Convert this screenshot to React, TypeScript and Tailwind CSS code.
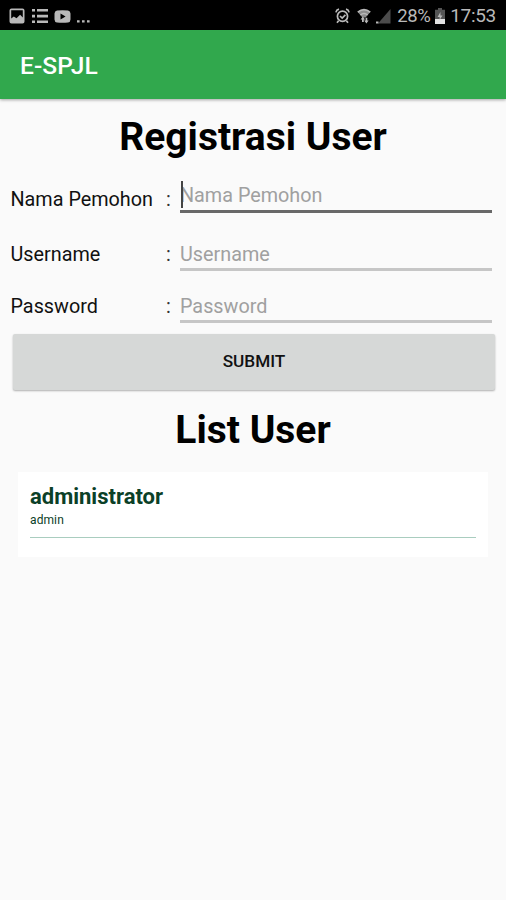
import clsx from "clsx";

function StatusBar() {
  return (
    <div className="flex h-[30px] items-center justify-between bg-black pl-[9px] pr-[10px] pt-[2px] text-[#b9b9b9]">
      <div className="flex items-center">
        <svg className="h-4 w-4" viewBox="0 0 16 16" fill="currentColor">
          <path
            fillRule="evenodd"
            d="M2.5 0.5h11a2 2 0 0 1 2 2v11a2 2 0 0 1-2 2h-11a2 2 0 0 1-2-2v-11a2 2 0 0 1 2-2zM2.2 2.2v8.2l2.6-2 2.7 1.8 3.6-3.4 2.7 2.8V2.2z"
          />
        </svg>
        <svg className="ml-[7px] h-4 w-4" viewBox="0 0 16 16" fill="currentColor">
          <path d="M0 1h3v2.6H0zM5 1h11v2.6H5zM0 6.8h3v2.6H0zM5 6.8h11v2.6H5zM0 12.4h3V15H0zM5 12.4h11V15H5z" />
        </svg>
        <svg className="ml-[6px] h-[13px] w-[17px]" viewBox="0 0 17 13" fill="currentColor">
          <path
            fillRule="evenodd"
            d="M3 0.5Q8.5 0 14 0.5Q16.4 0.8 16.5 3.5v6q-.1 2.7-2.5 3q-5.5.5-11 0Q.6 12.2.5 9.5v-6Q.6.8 3 .5zM6.5 3.6v5.8L11.6 6.5z"
          />
        </svg>
        <svg className="ml-[6px] mt-[10px] h-[3px] w-[13px]" viewBox="0 0 13 3" fill="currentColor">
          <path d="M0 .2h2.6v2.4H0zM5 .2h2.6v2.4H5zM10 .2h2.6v2.4H10z" />
        </svg>
      </div>
      <div className="flex items-center">
        <svg
          className="h-4 w-[15px]"
          viewBox="0 0 15 16"
          fill="none"
          stroke="currentColor"
          strokeWidth="1.7"
        >
          <circle cx="7.5" cy="8.2" r="5.1" />
          <path d="M.9 4.3A4 4 0 0 1 4 1.2M14.1 4.3A4 4 0 0 0 11 1.2M5 8l2.2 2.1L10.4 6.8M3.6 12.7 2 14.8M11.4 12.7l1.6 2.1" />
        </svg>
        <svg className="ml-[7px] h-4 w-[14px]" viewBox="0 0 14 16">
          <path d="M.5 3.8Q7-1.4 13.5 3.8L8.6 9.6H5.4z" fill="#8c8c8c" />
          <path
            d="M.8 4.1Q7-.8 13.2 4.1M3.4 7Q7 4 10.6 7"
            fill="none"
            stroke="currentColor"
            strokeWidth="1.6"
          />
          <path d="M5.8 8.5 3.6 11.4H5V14h1.8v-2.6H8zM9.4 15.6l2.2-3h-1.3V9.8H8.6v2.8H7.2z" fill="currentColor" />
        </svg>
        <svg className="ml-[5px] h-[15px] w-[15px]" viewBox="0 0 15 15">
          <path d="M14.5 0v14.5H2z" fill="#4c4c4c" />
          <path d="M0 12.5h2.5v2H0z" fill="currentColor" />
        </svg>
        <span className="ml-[6px] w-[34px] text-[18.5px] leading-6 tracking-[-0.3px]">28%</span>
        <svg className="ml-[4px] h-4 w-[10px]" viewBox="0 0 10 16">
          <path d="M3 0h4v1.8h3V16H0V1.8h3z" fill="#555" />
          <path d="M0 11h10v5H0z" fill="#e2e2e2" />
          <path d="M5.4 4 2.6 9H4.6v3L7.5 7.6H5.5z" fill="#b5b5b5" />
        </svg>
        <span className="ml-[5px] text-[19px] leading-6 tracking-[-0.3px]">17:53</span>
      </div>
    </div>
  );
}

export default function App() {
  const fields = [
    { name: "Nama Pemohon", focused: true, row: "h-[52px]" },
    { name: "Username", focused: false, row: "h-[58px]" },
    { name: "Password", focused: false, row: "h-[52px]" },
  ];

  const users = [{ name: "administrator", role: "admin" }];

  return (
    <div className="h-[900px] w-full overflow-hidden bg-[#fafafa] font-['Roboto',sans-serif] text-black">
      <StatusBar />
      <header className="relative flex h-[69px] items-center bg-[#31a84d] pl-5 pt-[3px] shadow-[0_1px_3px_rgba(0,0,0,0.35)]">
        <h1 className="text-[24.5px] font-medium leading-8 tracking-[0.1px] text-white">E-SPJL</h1>
      </header>
      <section className="pt-[14px]">
        <h2 className="text-center text-[39px] font-bold leading-[48px]">Registrasi User</h2>
        {fields.map((field) => (
          <div key={field.name} className={clsx("flex items-end pl-[10.5px] pr-[14px]", field.row)}>
            <div
              className={clsx(
                "flex w-[169.5px] text-[19.8px] leading-6",
                field.focused ? "pb-[1px]" : "pb-[4px]"
              )}
            >
              <span className="w-[155.5px] text-[#111]">{field.name}</span>
              <span className="text-[#333]">:</span>
            </div>
            <div
              className={clsx(
                "relative flex-1 border-b-[3px] text-[19.8px] leading-6 text-[#a0a0a0]",
                field.focused ? "border-[#686868] pb-[2px]" : "border-[#c6c6c6] pb-[1px]"
              )}
            >
              {field.focused && (
                <span className="absolute bottom-[2px] left-[1px] h-[27px] w-[2px] bg-[#444]"></span>
              )}
              {field.name}
            </div>
          </div>
        ))}
        <button className="ml-[13px] mt-[11px] block h-[56px] w-[482px] rounded-[2px] bg-[#d6d8d7] text-[17.2px] font-medium text-[#111] shadow-[0_1px_2px_rgba(0,0,0,0.3)]">
          SUBMIT
        </button>
      </section>
      <section className="pt-4">
        <h2 className="text-center text-[39px] font-bold leading-[48px]">List User</h2>
        <div className="ml-[18px] mt-[18px] h-[85px] w-[470px] bg-white px-3 pt-[11px]">
          {users.map((user) => (
            <div key={user.name} className="h-[55px] border-b border-[#a9cdbf] text-[#0b4027]">
              <h3 className="text-[22px] font-bold leading-7">{user.name}</h3>
              <p className="text-[12px] leading-[18px] tracking-[0.1px]">{user.role}</p>
            </div>
          ))}
        </div>
      </section>
    </div>
  );
}
